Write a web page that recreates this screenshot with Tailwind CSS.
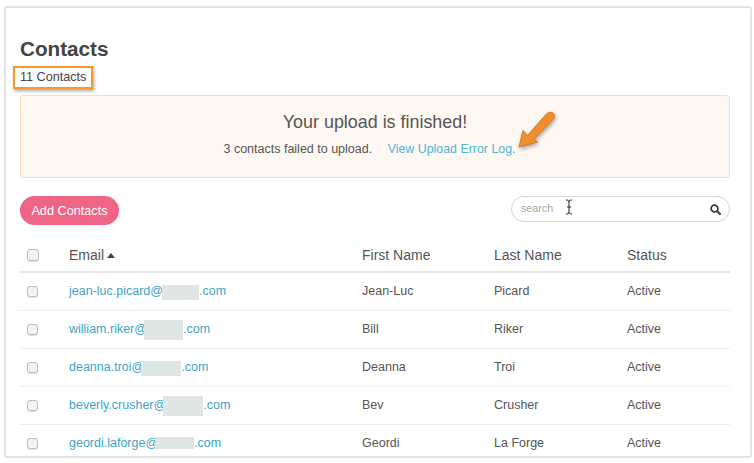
<!DOCTYPE html>
<html lang="en">
  <head>
    <meta charset="UTF-8" />
    <title>Contacts</title>
    <script src="https://cdn.jsdelivr.net/npm/@tailwindcss/browser@4"></script>
  </head>

  <body class="bg-white font-['Liberation_Sans',Arial,sans-serif] text-[#555]">
    <div class="ml-[4px] mt-[6px] w-[748px] h-[452px] border-2 border-[#e4e4e4] rounded-[3px] px-[14px] overflow-hidden relative">
      <!-- Heading -->
      <h1 class="mt-[29px] text-[20.7px] leading-[24px] font-bold text-[#444]">Contacts</h1>
      <div class="-ml-[7px] mt-[5px] w-[80px] h-[23px] border-2 border-[#f7972f] shadow-[1px_2px_3px_rgba(0,0,0,0.35)] pl-[5px] text-[12.6px] leading-[19px] text-[#444]">11 Contacts</div>

      <!-- Upload alert -->
      <div class="mt-[6px] w-[710px] h-[83px] rounded-[3px] border border-[#fbdfb8] bg-[#fdf8f2] text-center">
        <p class="mt-[14px] text-[17.9px] leading-[24px] text-[#555]">Your upload is finished!</p>
        <p class="mt-[5px] text-[12.5px] leading-[20px] -ml-[11px]">
          3 contacts failed to upload.
          <a href="#" class="ml-[12px] text-[12.4px] text-[#54b4d4]">View Upload Error Log.</a>
        </p>
      </div>
      <!-- Annotation arrow -->
      <svg class="absolute left-[505px] top-[98px] w-[50px] h-[50px] drop-shadow-[1px_2px_2px_rgba(0,0,0,0.35)]" viewBox="0 0 50 50">
        <path d="M8 41 L12 24.5 L16.5 29.5 L35 8.5 C37 6 41 5.5 42.5 7.5 C44 9.5 43.5 12 41.5 14 L22.5 33.5 L26.5 36 Z" fill="#f18e2e" stroke="#cf7c2c" stroke-width="1" stroke-linejoin="round" />
      </svg>

      <!-- Actions -->
      <div class="mt-[18px] w-[710px] flex items-start justify-between">
        <button class="w-[99px] h-[29px] pt-[2px] rounded-full bg-[#ef6586] text-white text-[12.7px] font-medium">Add Contacts</button>
        <div class="relative w-[219px] h-[26px] rounded-full border border-[#d6d6d6] flex items-center pl-[9px] pb-[1px]">
          <span class="text-[10.7px] text-[#a8a8a8]">search</span>
          <svg class="absolute left-[198px] top-[7px] w-[11px] h-[11px]" viewBox="0 0 11 11" fill="none" stroke="#3a3a3a">
            <circle cx="4.5" cy="4.5" r="3.4" stroke-width="1.7" />
            <path d="M7 7 L10 10" stroke-width="2" stroke-linecap="round" />
          </svg>
          <!-- Text cursor -->
          <svg class="absolute left-[52px] top-[2px] w-[10px] h-[16px]" viewBox="0 0 10 16" fill="none" stroke="#222" stroke-width="1">
            <path d="M2 1 C4 1 5 1.5 5 3 V13 C5 14.5 4 15 2 15 M8 1 C6 1 5 1.5 5 3 M5 13 C5 14.5 6 15 8 15 M3 8 H7" />
          </svg>
        </div>
      </div>

      <!-- Contacts table -->
      <table class="mt-[14px] w-[710px] table-fixed text-left text-[12.5px]">
        <thead>
          <tr class="h-[33px] border-b-2 border-[#e6e6e6] text-[14px] font-normal">
            <th class="w-[49px] pl-[7px] font-normal"><span class="block w-[12px] h-[12px] rounded-[3px] border border-[#bdbdbd] bg-[#f3f3f3] shadow-[0_1px_1px_rgba(0,0,0,0.12)]"></span></th>
            <th class="w-[293px] font-normal">Email<span class="inline-block ml-[3px] mb-[2px] border-x-4 border-b-[5px] border-x-transparent border-b-[#444]"></span></th>
            <th class="w-[132px] font-normal">First Name</th>
            <th class="w-[133px] font-normal">Last Name</th>
            <th class="font-normal">Status</th>
          </tr>
        </thead>
        <tbody>
          <tr class="h-[38px] border-b border-[#eeeeee]">
            <td class="pl-[7px]"><span class="block w-[11px] h-[11px] rounded-[3px] border border-[#bdbdbd] bg-[#f3f3f3] shadow-[0_1px_1px_rgba(0,0,0,0.12)]"></span></td>
            <td><a href="#" class="flex items-center text-[#3ea4c4]">jean-luc.picard@<span class="-ml-[1px] w-[37px] h-[15px] bg-[#dfe6e4] translate-y-[1px]"></span>.com</a></td>
            <td>Jean-Luc</td>
            <td>Picard</td>
            <td>Active</td>
          </tr>
          <tr class="h-[38px] border-b border-[#eeeeee]">
            <td class="pl-[7px]"><span class="block w-[11px] h-[11px] rounded-[3px] border border-[#bdbdbd] bg-[#f3f3f3] shadow-[0_1px_1px_rgba(0,0,0,0.12)]"></span></td>
            <td><a href="#" class="flex items-center text-[#3ea4c4]">william.riker@<span class="-ml-[3px] w-[39px] h-[20px] bg-[#dfe6e4] translate-y-[1px]"></span>.com</a></td>
            <td>Bill</td>
            <td>Riker</td>
            <td>Active</td>
          </tr>
          <tr class="h-[38px] border-b border-[#eeeeee]">
            <td class="pl-[7px]"><span class="block w-[11px] h-[11px] rounded-[3px] border border-[#bdbdbd] bg-[#f3f3f3] shadow-[0_1px_1px_rgba(0,0,0,0.12)]"></span></td>
            <td><a href="#" class="flex items-center text-[#3ea4c4]">deanna.troi@<span class="-ml-[3px] w-[40px] h-[15px] bg-[#dfe6e4] translate-y-[1px]"></span>.com</a></td>
            <td>Deanna</td>
            <td>Troi</td>
            <td>Active</td>
          </tr>
          <tr class="h-[38px] border-b border-[#eeeeee]">
            <td class="pl-[7px]"><span class="block w-[11px] h-[11px] rounded-[3px] border border-[#bdbdbd] bg-[#f3f3f3] shadow-[0_1px_1px_rgba(0,0,0,0.12)]"></span></td>
            <td><a href="#" class="flex items-center text-[#3ea4c4]">beverly.crusher@<span class="-ml-[3px] w-[40px] h-[20px] bg-[#dfe6e4] translate-y-[1px]"></span>.com</a></td>
            <td>Bev</td>
            <td>Crusher</td>
            <td>Active</td>
          </tr>
          <tr class="h-[38px]">
            <td class="pl-[7px]"><span class="block w-[11px] h-[11px] rounded-[3px] border border-[#bdbdbd] bg-[#f3f3f3] shadow-[0_1px_1px_rgba(0,0,0,0.12)]"></span></td>
            <td><a href="#" class="flex items-center text-[#3ea4c4]">geordi.laforge@<span class="-ml-[3px] w-[39px] h-[12px] bg-[#dfe6e4]"></span>.com</a></td>
            <td>Geordi</td>
            <td>La Forge</td>
            <td>Active</td>
          </tr>
        </tbody>
      </table>
    </div>
  </body>
</html>
